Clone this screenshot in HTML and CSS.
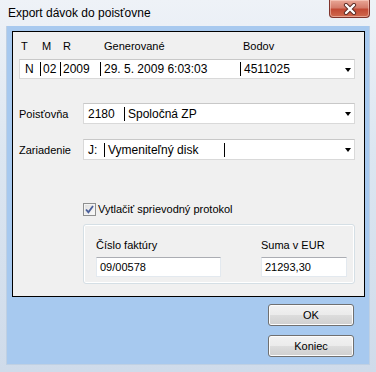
FILE: index.html
```html
<!DOCTYPE html>
<html>
  <head>
    <title>Export dávok do poisťovne</title>
    <link rel="stylesheet" href="styles.css">
  </head>
  <body>
    <div class="window">
      <div class="titlebar">
        <span class="title">Export dávok do poisťovne</span>
        <button class="close">
          <svg width="16" height="12" viewBox="0 0 16 12">
            <path d="M4 2 L12 10 M12 2 L4 10" stroke="#5a2a24" stroke-width="4.2" stroke-linecap="round"/>
            <path d="M4 2 L12 10 M12 2 L4 10" stroke="#ffffff" stroke-width="2.4" stroke-linecap="round"/>
          </svg>
        </button>
      </div>

      <div class="client">
        <div class="panel">
          <div class="head">
            <span class="h-t">T</span>
            <span class="h-m">M</span>
            <span class="h-r">R</span>
            <span class="h-gen">Generované</span>
            <span>Bodov</span>
          </div>

          <div class="combo">
            <span class="seg seg-first w20">N</span>
            <span class="seg w20">02</span>
            <span class="seg w40">2009</span>
            <span class="seg seg-wide w140">29. 5. 2009 6:03:03</span>
            <span class="seg seg-wide fill">4511025</span>
            <span class="arrow"></span>
          </div>

          <div class="field field-ins">
            <span class="field-label">Poisťovňa</span>
            <div class="combo combo-field">
              <span class="seg seg-code w40">2180</span>
              <span class="seg seg-wide fill">Spoločná ZP</span>
              <span class="arrow"></span>
            </div>
          </div>

          <div class="field field-dev">
            <span class="field-label">Zariadenie</span>
            <div class="combo combo-field">
              <span class="seg seg-code w20">J:</span>
              <span class="seg seg-wide w120">Vymeniteľný disk</span>
              <span class="seg fill"></span>
              <span class="arrow"></span>
            </div>
          </div>

          <label class="check">
            <span class="box">
              <svg width="9" height="9" viewBox="0 0 9 9">
                <path d="M1 4.5 L3.4 7.2 L8 1" fill="none" stroke="#4a5f9a" stroke-width="1.8"/>
              </svg>
            </span>
            Vytlačiť sprievodný protokol
          </label>

          <div class="group">
            <div class="col col-num">
              <div class="col-label">Číslo faktúry</div>
              <div class="input">09/00578</div>
            </div>
            <div class="col col-sum">
              <div class="col-label">Suma v EUR</div>
              <div class="input">21293,30</div>
            </div>
          </div>
        </div>

        <div class="actions">
          <button class="btn">OK</button>
          <button class="btn">Koniec</button>
        </div>
      </div>
    </div>
  </body>
</html>
```

FILE: styles.css
```css
body {
  margin: 0;
  font-family: "Liberation Sans", Arial, sans-serif;
  font-size: 11px;
  color: #000;
}
.window {
  width: 376px;
  height: 372px;
  box-sizing: border-box;
  padding: 0 6px 7px 6px;
  display: flex;
  flex-direction: column;
  background: linear-gradient(#eef2f7, #dce6f1 40%, #cfdbea);
}
.titlebar {
  height: 26px;
  display: flex;
  justify-content: space-between;
  align-items: flex-start;
  padding-left: 2px;
}
.title {
  line-height: 26px;
  font-size: 12px;
}
.close {
  width: 41px;
  height: 18px;
  padding: 0;
  border: 1px solid #7f342c;
  border-top: none;
  border-radius: 0 0 4px 4px;
  background: linear-gradient(#e9a797, #d47c6b 45%, #c24a35 55%, #d06a4f);
  box-shadow: inset 0 0 0 1px rgba(255, 220, 210, 0.5);
  display: flex;
  align-items: center;
  justify-content: center;
}
.client {
  flex: 1;
  background: #a7c9ef;
  padding: 5px 5px 0 6px;
  box-shadow: inset 1px 0 0 #bfd0e3, inset -1px 0 0 #bfd0e3, inset 0 -1px 0 #bfd0e3;
}
.panel {
  border: 1px solid #000;
  background: #f0f0f0;
  padding: 7px 9px 12px 6px;
}
.head {
  display: flex;
  line-height: 14px;
  padding-left: 2px;
}
.h-t, .h-m {
  width: 21px;
}
.h-r {
  width: 41px;
}
.h-gen {
  width: 139px;
}
.combo {
  margin-top: 6px;
  height: 20px;
  box-sizing: border-box;
  border: 1px solid #d9d9d9;
  border-top-color: #c8c8c8;
  background: #fff;
  display: flex;
  align-items: center;
  font-size: 12px;
}
.combo-field {
  margin-top: 0;
  height: 21px;
  flex: 1;
}
.seg {
  box-sizing: border-box;
  height: 14px;
  line-height: 14px;
  padding-left: 2px;
  border-left: 1px solid #000;
  white-space: nowrap;
}
.seg-first {
  border-left: none;
  padding-left: 5px;
}
.seg-code {
  border-left: none;
  padding-left: 4px;
}
.seg-wide {
  padding-left: 3px;
}
.w20 {
  width: 20px;
}
.w40 {
  width: 40px;
}
.w120 {
  width: 120px;
}
.w140 {
  width: 140px;
}
.fill {
  flex: 1;
}
.arrow {
  width: 0;
  height: 0;
  border-left: 3.5px solid transparent;
  border-right: 3.5px solid transparent;
  border-top: 4px solid #000;
  margin: 1px 3px 0 0;
}
.field {
  display: flex;
  align-items: center;
}
.field-ins {
  margin-top: 24px;
}
.field-dev {
  margin-top: 15px;
}
.field-label {
  width: 64px;
}
.check {
  margin: 43px 0 0 64px;
  display: flex;
  align-items: center;
  gap: 2px;
  line-height: 13px;
  height: 13px;
}
.box {
  width: 13px;
  height: 13px;
  box-sizing: border-box;
  border: 1px solid #8e8f8f;
  background: linear-gradient(135deg, #dcdcdc, #fbfbfb);
  box-shadow: inset 0 0 0 1px #f4f4f4;
  display: flex;
  align-items: center;
  justify-content: center;
}
.group {
  margin: 8px 0 0 64px;
  height: 60px;
  box-sizing: border-box;
  border: 1px solid #d5dfe5;
  border-radius: 3px;
  box-shadow: inset 0 0 0 1px #fff;
  padding: 13px 7px 6px 12px;
  display: flex;
  gap: 40px;
}
.col-num {
  width: 125px;
}
.col-sum {
  width: 86px;
}
.col-label {
  line-height: 14px;
}
.input {
  margin-top: 5px;
  height: 20px;
  box-sizing: border-box;
  border: 1px solid #e3e9ef;
  border-top-color: #abadb3;
  background: #fff;
  padding-left: 3px;
  line-height: 18px;
}
.actions {
  display: flex;
  flex-direction: column;
  align-items: flex-end;
  gap: 9px;
  margin-top: 7px;
  padding-right: 11px;
}
.btn {
  width: 86px;
  height: 22px;
  padding: 0;
  font-family: inherit;
  font-size: 11px;
  color: #000;
  border: 1px solid #707070;
  border-radius: 3px;
  background: linear-gradient(#f2f2f2, #ebebeb 50%, #dddddd 50%, #cfcfcf);
  box-shadow: inset 0 0 0 1px #fcfcfc;
}
```
